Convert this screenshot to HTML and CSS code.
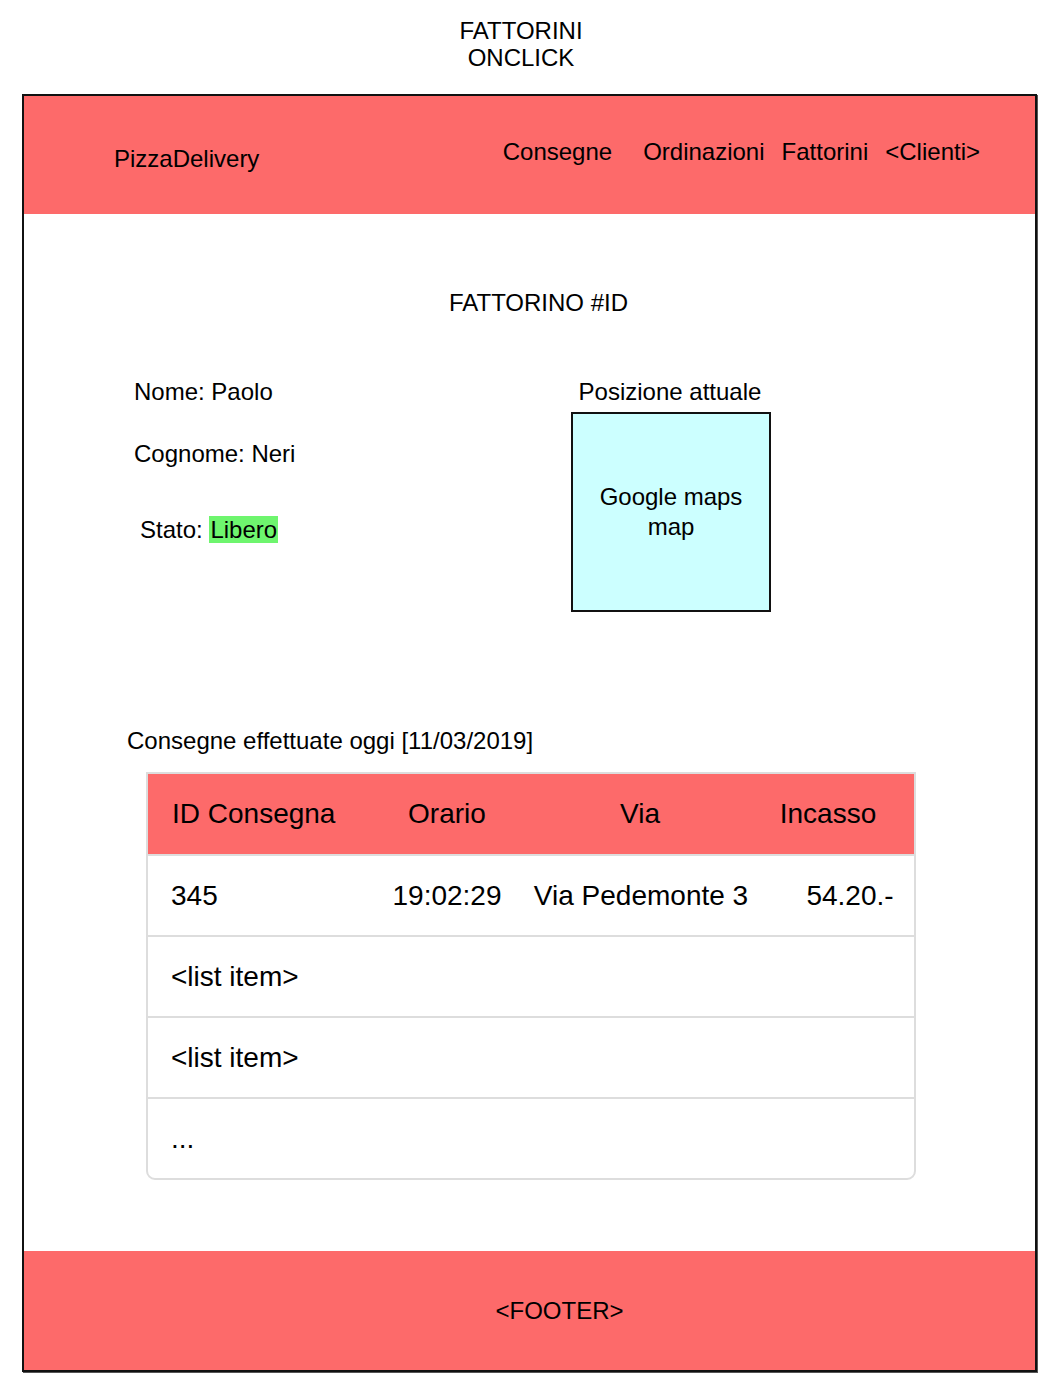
FILE: index.html
```html
<!DOCTYPE html>
<html lang="it">
<head>
<meta charset="utf-8">
<title>Fattorini onclick</title>
<link rel="stylesheet" href="styles.css">
</head>
<body>
<div class="page-title">FATTORINI<br>ONCLICK</div>
<div class="frame">
  <header class="topbar">
    <div class="brand">PizzaDelivery</div>
    <nav class="nav">
      <span class="nav-item first">Consegne</span>
      <span class="nav-item">Ordinazioni</span>
      <span class="nav-item">Fattorini</span>
      <span class="nav-item">&lt;Clienti&gt;</span>
    </nav>
  </header>
  <main class="content">
    <h1 class="heading">FATTORINO #ID</h1>
    <section class="details">
      <div class="fields">
        <div class="field">Nome: Paolo</div>
        <div class="field cognome">Cognome: Neri</div>
        <div class="field stato">Stato: <span class="badge">Libero</span></div>
      </div>
      <div class="position">
        <div class="position-label">Posizione attuale</div>
        <div class="map">Google maps<br>map</div>
      </div>
    </section>
    <div class="section-label">Consegne effettuate oggi [11/03/2019]</div>
    <div class="table">
      <div class="row head">
        <div class="c1">ID Consegna</div>
        <div class="c2">Orario</div>
        <div class="c3">Via</div>
        <div class="c4 head-incasso">Incasso</div>
      </div>
      <div class="row">
        <div class="c1">345</div>
        <div class="c2">19:02:29</div>
        <div class="c3">Via Pedemonte 3</div>
        <div class="c4 val-incasso">54.20.-</div>
      </div>
      <div class="row">
        <div class="c1">&lt;list item&gt;</div>
      </div>
      <div class="row">
        <div class="c1">&lt;list item&gt;</div>
      </div>
      <div class="row last">
        <div class="c1">...</div>
      </div>
    </div>
  </main>
  <footer class="footer">&lt;FOOTER&gt;</footer>
</div>
</body>
</html>
```

FILE: styles.css
```css
* { box-sizing: border-box; }

html, body {
  margin: 0;
  padding: 0;
  background: #ffffff;
}

body {
  font-family: "Liberation Sans", Arial, Helvetica, sans-serif;
  font-size: 24px;
  color: #000;
  width: 1060px;
  height: 1398px;
  overflow: hidden;
}

.page-title {
  height: 94px;
  padding-top: 17px;
  padding-right: 18px;
  line-height: 27px;
  text-align: center;
}

.frame {
  margin-left: 22px;
  width: 1015px;
  height: 1278px;
  border: 2px solid #111;
  display: flex;
  flex-direction: column;
  box-shadow: 1px 1px 0 #555;
}

.topbar {
  height: 118px;
  background: #fd6a6a;
  display: flex;
  align-items: center;
  padding-left: 90px;
  padding-right: 55px;
}

.brand {
  padding-top: 7px;
  line-height: 28px;
}

.nav {
  margin-left: auto;
  display: flex;
  gap: 17px;
  padding-bottom: 6px;
  line-height: 28px;
}

.nav-item.first { margin-right: 14px; }

.content {
  flex: 1;
  padding-top: 75px;
}

.heading {
  margin: 0;
  font-size: 24px;
  font-weight: normal;
  line-height: 28px;
  text-align: center;
  padding-left: 18px;
}

.details {
  display: flex;
  margin-top: 61px;
  padding-left: 110px;
}

.fields {
  width: 437px;
}

.field { line-height: 28px; }
.cognome { margin-top: 34px; }
.stato { margin-top: 48px; padding-left: 6px; }

.badge {
  display: inline-block;
  background: #6ef56e;
  line-height: 27px;
  padding: 0 1px;
}

.position {
  width: 200px;
  text-align: center;
}

.position-label {
  line-height: 28px;
  margin-left: -2px;
}

.map {
  margin-top: 6px;
  width: 200px;
  height: 200px;
  border: 2px solid #111;
  background: #ccffff;
  display: flex;
  align-items: center;
  justify-content: center;
  line-height: 30px;
}

.section-label {
  margin-top: 115px;
  padding-left: 103px;
  line-height: 28px;
}

.table {
  margin-top: 17px;
  margin-left: 122px;
  width: 770px;
  border: 2px solid #dddddd;
  border-radius: 0 0 9px 9px;
  font-size: 28px;
  overflow: hidden;
}

.row {
  display: grid;
  grid-template-columns: 234px 130px 258px 144px;
  align-items: center;
  height: 81px;
  border-top: 2px solid #dddddd;
}

.row.head {
  height: 80px;
  border-top: none;
  background: #fd6a6a;
}

.c1 { padding-left: 23px; white-space: nowrap; }
.c2, .c3, .c4 { text-align: center; white-space: nowrap; }
.head .c1 { padding-left: 24px; }
.head-incasso { padding-right: 28px; }
.val-incasso { padding-left: 16px; }
.head .c3 { padding-right: 2px; }

.footer {
  height: 119px;
  background: #fd6a6a;
  display: flex;
  align-items: center;
  justify-content: center;
  padding-left: 60px;
  line-height: 28px;
}
```
